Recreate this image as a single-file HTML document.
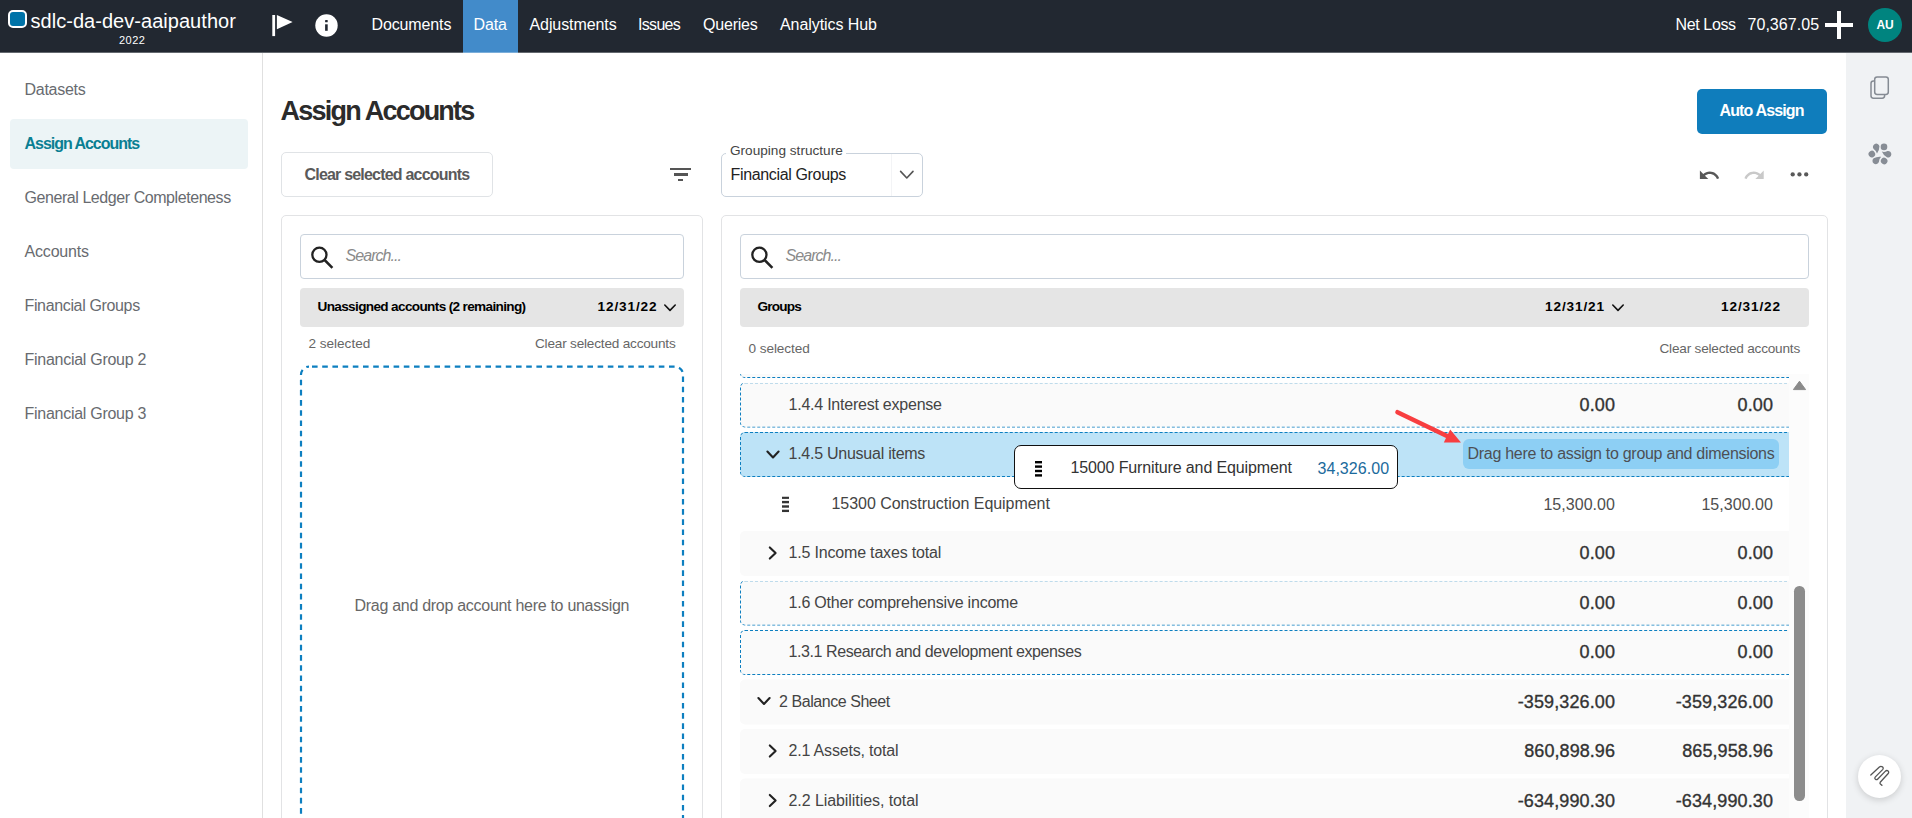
<!DOCTYPE html>
<html lang="en">
<head>
<meta charset="utf-8">
<title>Assign Accounts</title>
<style>
*{box-sizing:border-box;margin:0;padding:0}
html,body{width:1912px;height:818px;overflow:hidden;background:#fff}
body{font-family:"Liberation Sans",sans-serif;font-size:16px;color:#333;position:relative}
.abs{position:absolute}
.t{position:absolute;white-space:nowrap;line-height:20px;height:20px}
.b{font-weight:bold}
#nav{position:absolute;left:0;top:0;width:1912px;height:52px;background:#222831}
#navedge{position:absolute;left:0;top:52px;width:1912px;height:1px;background:#64696f}
#navedge i{position:absolute;left:463px;top:0;width:55px;height:1px;background:#7baeda}
#nav .t{color:#fff}
#tab{position:absolute;left:463px;top:0;width:55px;height:52px;background:#428bca}
#side{position:absolute;left:0;top:53px;width:263px;height:765px;background:#fff;border-right:1px solid #e0e0e0}
#side .t{color:#686b70;left:24.5px}
#sel{position:absolute;left:10px;top:66px;width:238px;height:50px;background:#ecf4f6;border-radius:4px}
#rail{position:absolute;left:1846px;top:53px;width:66px;height:765px;background:#f0f2f4}
.panel{position:absolute;border:1px solid #e2e3e5;border-radius:5px;background:#fff}
.search{position:absolute;height:45px;border:1px solid #c9d2dc;border-radius:4px;background:#fff}
.hdr{position:absolute;height:39px;background:#e5e5e5;border-radius:4px}
.sm{font-size:13.6px;color:#666}
.hb{font-size:13.6px;color:#000;font-weight:bold}
.row{position:absolute;left:0;width:1064px;height:45px;background:#fafafa;border-radius:5px}
.row.d2{border:1px dashed #0d7fc0}
.row .t{top:12px;color:#444}
.num{position:absolute;top:11px;white-space:nowrap;line-height:22px;height:22px;font-size:18px;color:#333;text-align:right;-webkit-text-stroke:0.35px #333}
.num16{position:absolute;top:12.5px;white-space:nowrap;line-height:20px;height:20px;font-size:16px;color:#4e4e4e;text-align:right}
.half{transform:translateY(0.5px)}
/*LS*/
#n_title{letter-spacing:0.038px}
#n_year{letter-spacing:0.504px}
#n1{letter-spacing:-0.122px}
#n2{letter-spacing:-0.100px}
#n3{letter-spacing:-0.090px}
#n4{letter-spacing:-0.685px}
#n5{letter-spacing:-0.202px}
#n6{letter-spacing:-0.070px}
#n7{letter-spacing:-0.371px}
#n8{letter-spacing:0.043px}
#n_au{letter-spacing:-0.060px}
#s1{letter-spacing:-0.283px}
#s2{letter-spacing:-1.031px}
#s3{letter-spacing:-0.433px}
#s4{letter-spacing:-0.174px}
#s5{letter-spacing:-0.352px}
#s6{letter-spacing:-0.274px}
#s7{letter-spacing:-0.274px}
#h1{letter-spacing:-1.764px}
#aa{letter-spacing:-0.868px}
#csa{letter-spacing:-0.799px}
#gl{letter-spacing:0.011px}
#gv{letter-spacing:-0.347px}
#se1{letter-spacing:-0.940px}
#lh1{letter-spacing:-0.656px}
#lh2{letter-spacing:0.885px}
#l2s{letter-spacing:-0.027px}
#lcs{letter-spacing:-0.199px}
#ldd{letter-spacing:-0.286px}
#se2{letter-spacing:-0.940px}
#rh1{letter-spacing:-0.803px}
#rh2{letter-spacing:0.885px}
#rh3{letter-spacing:0.885px}
#r0s{letter-spacing:-0.077px}
#rcs{letter-spacing:-0.199px}
#r0{letter-spacing:-0.231px}
#v0a{letter-spacing:0.098px}
#v0b{letter-spacing:0.098px}
#r1{letter-spacing:-0.252px}
#pill{letter-spacing:-0.288px}
#r2{letter-spacing:-0.050px}
#v2a{letter-spacing:0.043px}
#v2b{letter-spacing:0.043px}
#r3{letter-spacing:-0.180px}
#v3a{letter-spacing:0.098px}
#v3b{letter-spacing:0.098px}
#r4{letter-spacing:-0.208px}
#v4a{letter-spacing:0.098px}
#v4b{letter-spacing:0.098px}
#r5{letter-spacing:-0.408px}
#v5a{letter-spacing:0.098px}
#v5b{letter-spacing:0.098px}
#r6{letter-spacing:-0.443px}
#v6a{letter-spacing:0.107px}
#v6b{letter-spacing:0.107px}
#r7{letter-spacing:-0.176px}
#v7a{letter-spacing:0.061px}
#v7b{letter-spacing:0.061px}
#r8{letter-spacing:-0.073px}
#v8a{letter-spacing:0.107px}
#v8b{letter-spacing:0.107px}
#dc1{letter-spacing:-0.129px}
#dc2{letter-spacing:0.043px}
/*ENDLS*/
</style>
</head>
<body>

<div id="nav">
<div class="abs" style="left:8px;top:10px;width:19px;height:18px;border:2px solid #fff;border-radius:5px;background:#0073a8"></div>
<div class="t" id="n_title" style="left:30.5px;top:10px;font-size:20px;line-height:22px;height:22px">sdlc-da-dev-aaipauthor</div>
<div class="t" id="n_year" style="left:119px;top:33px;font-size:11px;line-height:14px;height:14px">2022</div>
<svg class="abs" style="left:270px;top:13px" width="24" height="24" viewBox="0 0 24 24"><rect x="2.3" y="2" width="2.8" height="21.1" fill="#fff"/><path d="M6.9 2 L22.6 9.1 L6.9 16.2 Z" fill="#fff"/></svg>
<svg class="abs" style="left:315px;top:14px" width="23" height="23" viewBox="0 0 23 23"><circle cx="11.5" cy="11.5" r="11.2" fill="#fff"/><rect x="10.1" y="6.1" width="2.6" height="2.2" rx="0.5" fill="#222831"/><rect x="10.1" y="10.3" width="2.6" height="6.5" fill="#222831"/></svg>
<div id="tab"></div>
<div class="t" id="n1" style="left:371.5px;top:14.5px">Documents</div>
<div class="t" id="n2" style="left:473.5px;top:14.5px">Data</div>
<div class="t" id="n3" style="left:529.5px;top:14.5px">Adjustments</div>
<div class="t" id="n4" style="left:638px;top:14.5px">Issues</div>
<div class="t" id="n5" style="left:703px;top:14.5px">Queries</div>
<div class="t" id="n6" style="left:780px;top:14.5px">Analytics Hub</div>
<div class="t" id="n7" style="left:1675.5px;top:14.5px">Net Loss</div>
<div class="t" id="n8" style="left:1747.5px;top:14.5px">70,367.05</div>
<div class="abs" style="left:1825px;top:23px;width:28px;height:4px;background:#fff"></div>
<div class="abs" style="left:1837px;top:11px;width:4px;height:28px;background:#fff"></div>
<div class="abs" style="left:1868px;top:8px;width:34px;height:34px;border-radius:50%;background:#00847f"></div>
<div class="t b" id="n_au" style="left:1868px;top:15px;width:34px;text-align:center;font-size:12px">AU</div>
</div>
<div id="navedge"><i></i></div>

<div id="side">
<div id="sel"></div>
<div class="t" id="s1" style="top:27px">Datasets</div>
<div class="t b" id="s2" style="top:81px;color:#0a7f93">Assign Accounts</div>
<div class="t" id="s3" style="top:135px">General Ledger Completeness</div>
<div class="t" id="s4" style="top:189px">Accounts</div>
<div class="t" id="s5" style="top:243px">Financial Groups</div>
<div class="t" id="s6" style="top:297px">Financial Group 2</div>
<div class="t" id="s7" style="top:351px">Financial Group 3</div>
</div>
<div id="rail"></div>

<div class="t b" id="h1" style="left:280.5px;top:95px;font-size:27px;line-height:32px;height:32px;color:#2b2b2b">Assign Accounts</div>
<div class="abs" style="left:1697px;top:89px;width:130px;height:45px;background:#0f7dbc;border-radius:5px"></div>
<div class="t b" id="aa" style="left:1719.5px;top:100.5px;color:#fff">Auto Assign</div>
<div class="abs" style="left:281px;top:152px;width:212px;height:45px;border:1px solid #e0e3e6;border-radius:5px"></div>
<div class="t b" id="csa" style="left:304.5px;top:164.5px;color:#5a5a5a">Clear selected accounts</div>
<div class="abs" style="left:670px;top:168px;width:21px;height:2.4px;background:#555"></div>
<div class="abs" style="left:673.5px;top:173.4px;width:14px;height:2.4px;background:#555"></div>
<div class="abs" style="left:678px;top:178.8px;width:5px;height:2.4px;background:#555"></div>
<div class="abs" style="left:721px;top:153px;width:202px;height:44px;border:1px solid #c9d2dc;border-radius:5px"></div>
<div class="abs" style="left:726px;top:150px;width:120px;height:6px;background:#fff"></div>
<div class="abs" style="left:891px;top:154px;width:1px;height:42px;background:#f3f4f6"></div>
<div class="t" id="gl" style="left:730px;top:142px;font-size:13.6px;line-height:18px;height:18px;color:#444">Grouping structure</div>
<div class="t" id="gv" style="left:730.5px;top:164.5px;color:#222">Financial Groups</div>
<svg class="abs" style="left:898px;top:167px" width="18" height="16" viewBox="0 0 18 16"><path d="M2.6 4.4 L8.8 11 L15 4.4" fill="none" stroke="#555" stroke-width="1.6" stroke-linecap="round" stroke-linejoin="round"/></svg>
<div class="abs" style="left:1697px;top:163.5px;width:24px;height:15px;overflow:hidden"><svg width="22.6" height="22.6" viewBox="0 0 24 24" style="position:absolute;left:0.8px;top:0"><path fill="#585858" d="M12.5 8c-2.65 0-5.05.99-6.9 2.6L2 7v9h9l-3.62-3.62c1.39-1.16 3.16-1.88 5.12-1.88 3.54 0 6.55 2.31 7.6 5.5l2.37-.78C21.08 11.03 17.15 8 12.5 8z"/></svg></div>
<div class="abs" style="left:1742px;top:163.5px;width:24px;height:15px;overflow:hidden"><svg width="22.6" height="22.6" viewBox="0 0 24 24" style="position:absolute;left:0.8px;top:0"><path fill="#c9c9c9" d="M18.4 10.6C16.55 8.99 14.15 8 11.5 8c-4.65 0-8.58 3.03-9.96 7.22L3.9 16c1.05-3.19 4.05-5.5 7.6-5.5 1.95 0 3.73.72 5.12 1.88L13 16h9V7l-3.6 3.6z"/></svg></div>
<svg class="abs" style="left:1788px;top:170px" width="24" height="9" viewBox="0 0 24 9"><g fill="#595959"><circle cx="4.7" cy="4.4" r="2.15"/><circle cx="11.45" cy="4.4" r="2.15"/><circle cx="18.2" cy="4.4" r="2.15"/></g></svg>

<div class="panel" style="left:281px;top:215px;width:422px;height:620px"></div>
<div class="search" style="left:300px;top:234px;width:384px"></div>
<svg class="abs" style="left:310px;top:244.7px" width="26" height="26" viewBox="0 0 26 26"><circle cx="9.4" cy="9.8" r="7.1" fill="none" stroke="#222" stroke-width="2.3"/><path d="M14.6 15 L22.4 22.8" stroke="#222" stroke-width="2.5" fill="none"/></svg>
<div class="t" id="se1" style="left:345.5px;top:246px;font-style:italic;color:#8a8a8a">Search...</div>
<div class="hdr" style="left:300px;top:288px;width:384px"></div>
<div class="t hb" id="lh1" style="left:317.5px;top:296.5px">Unassigned accounts (2 remaining)</div>
<div class="t hb" id="lh2" style="left:597.5px;top:296.5px">12/31/22</div>
<svg class="abs" style="left:663px;top:303px" width="14" height="10" viewBox="0 0 14 10"><path d="M1.8 2 L7 7.4 L12.2 2" fill="none" stroke="#111" stroke-width="1.6" stroke-linecap="round" stroke-linejoin="round"/></svg>
<div class="t sm" id="l2s" style="left:308.5px;top:334px">2 selected</div>
<div class="t sm" id="lcs" style="left:535px;top:334px">Clear selected accounts</div>
<svg class="abs" style="left:299px;top:364px" width="388" height="460" viewBox="0 0 388 460"><rect x="2" y="2.6" width="382" height="500" rx="8" ry="8" fill="none" stroke="#0d7fc0" stroke-width="2.2" stroke-dasharray="5.6 4.6" stroke-dashoffset="-3"/></svg>
<div class="t" id="ldd" style="left:354.5px;top:596px;color:#676767">Drag and drop account here to unassign</div>
<div class="panel" style="left:721px;top:215px;width:1107px;height:620px"></div>
<div class="search" style="left:740px;top:234px;width:1069px"></div>
<svg class="abs" style="left:750px;top:244.7px" width="26" height="26" viewBox="0 0 26 26"><circle cx="9.4" cy="9.8" r="7.1" fill="none" stroke="#222" stroke-width="2.3"/><path d="M14.6 15 L22.4 22.8" stroke="#222" stroke-width="2.5" fill="none"/></svg>
<div class="t" id="se2" style="left:785.5px;top:246px;font-style:italic;color:#8a8a8a">Search...</div>
<div class="hdr" style="left:740px;top:288px;width:1069px"></div>
<div class="t hb" id="rh1" style="left:757.5px;top:296.5px">Groups</div>
<div class="t hb" id="rh2" style="left:1545px;top:296.5px">12/31/21</div>
<svg class="abs" style="left:1611px;top:303px" width="14" height="10" viewBox="0 0 14 10"><path d="M1.8 2 L7 7.4 L12.2 2" fill="none" stroke="#111" stroke-width="1.6" stroke-linecap="round" stroke-linejoin="round"/></svg>
<div class="t hb" id="rh3" style="left:1721px;top:296.5px">12/31/22</div>
<div class="t sm" id="r0s" style="left:748.5px;top:339px">0 selected</div>
<div class="t sm" id="rcs" style="left:1659.5px;top:339px">Clear selected accounts</div>
<div class="abs" style="left:740px;top:374px;width:1069px;height:444px;overflow:hidden;background:#fcfcfc">
<div class="abs" style="left:0;top:0;width:1049px;height:444px;background:#fff;overflow:hidden">
<div class="row d2" style="top:-41px"></div>
<div class="row d2 half" style="top:8px"><div class="t" id="r0" style="left:47.5px;margin-top:-1px">1.4.4 Interest expense</div><div class="num" id="v0a" style="left:674px;width:200px;margin-top:-1px">0.00</div><div class="num" id="v0b" style="left:832px;width:200px;margin-top:-1px">0.00</div></div>
<div class="row d2" style="top:58px;background:#bde3f7"><svg class="abs" style="left:23.5px;top:15.5px" width="16" height="12" viewBox="0 0 16 12"><path d="M2.4 2.6 L8 8.4 L13.6 2.6" fill="none" stroke="#222" stroke-width="2.1" stroke-linecap="round" stroke-linejoin="round"/></svg><div class="t" id="r1" style="left:47.5px;margin-top:-1px">1.4.5 Unusual items</div><div class="abs" style="left:722px;top:6px;width:316px;height:30px;border-radius:6px;background:#8dcff4"></div><div class="t" id="pill" style="left:726.5px;top:11px;color:#4d4f54">Drag here to assign to group and dimensions</div></div>
<div class="row  half" style="top:107px;background:#fff"><svg class="abs" style="left:42px;top:15.1px" width="7" height="16" viewBox="0 0 7 16"><rect x="0" y="0.0" width="7" height="2.4" fill="#333"/><rect x="0" y="4.4" width="7" height="2.4" fill="#333"/><rect x="0" y="8.8" width="7" height="2.4" fill="#333"/><rect x="0" y="13.2" width="7" height="2.4" fill="#333"/></svg><div class="t" id="r2" style="left:91.5px;margin-top:-0px">15300 Construction Equipment</div><div class="num16" id="v2a" style="left:675px;width:200px;margin-top:-0px">15,300.00</div><div class="num16" id="v2b" style="left:833px;width:200px;margin-top:-0px">15,300.00</div></div>
<div class="row" style="top:157px"><svg class="abs" style="left:26.5px;top:14px" width="12" height="16" viewBox="0 0 12 16"><path d="M2.8 2.4 L8.6 8 L2.8 13.6" fill="none" stroke="#222" stroke-width="2.1" stroke-linecap="round" stroke-linejoin="round"/></svg><div class="t" id="r3" style="left:48.5px;margin-top:-0px">1.5 Income taxes total</div><div class="num" id="v3a" style="left:675px;width:200px;margin-top:-0px">0.00</div><div class="num" id="v3b" style="left:833px;width:200px;margin-top:-0px">0.00</div></div>
<div class="row d2 half" style="top:206px"><div class="t" id="r4" style="left:47.5px;margin-top:-1px">1.6 Other comprehensive income</div><div class="num" id="v4a" style="left:674px;width:200px;margin-top:-1px">0.00</div><div class="num" id="v4b" style="left:832px;width:200px;margin-top:-1px">0.00</div></div>
<div class="row d2" style="top:256px"><div class="t" id="r5" style="left:47.5px;margin-top:-1px">1.3.1 Research and development expenses</div><div class="num" id="v5a" style="left:674px;width:200px;margin-top:-1px">0.00</div><div class="num" id="v5b" style="left:832px;width:200px;margin-top:-1px">0.00</div></div>
<div class="row  half" style="top:305px"><svg class="abs" style="left:15.5px;top:16.0px" width="16" height="12" viewBox="0 0 16 12"><path d="M2.4 2.6 L8 8.4 L13.6 2.6" fill="none" stroke="#222" stroke-width="2.1" stroke-linecap="round" stroke-linejoin="round"/></svg><div class="t" id="r6" style="left:39px;margin-top:-0px">2 Balance Sheet</div><div class="num" id="v6a" style="left:675px;width:200px;margin-top:-0px">-359,326.00</div><div class="num" id="v6b" style="left:833px;width:200px;margin-top:-0px">-359,326.00</div></div>
<div class="row" style="top:355px"><svg class="abs" style="left:26.5px;top:14px" width="12" height="16" viewBox="0 0 12 16"><path d="M2.8 2.4 L8.6 8 L2.8 13.6" fill="none" stroke="#222" stroke-width="2.1" stroke-linecap="round" stroke-linejoin="round"/></svg><div class="t" id="r7" style="left:48.5px;margin-top:-0px">2.1 Assets, total</div><div class="num" id="v7a" style="left:675px;width:200px;margin-top:-0px">860,898.96</div><div class="num" id="v7b" style="left:833px;width:200px;margin-top:-0px">865,958.96</div></div>
<div class="row  half" style="top:404px"><svg class="abs" style="left:26.5px;top:14px" width="12" height="16" viewBox="0 0 12 16"><path d="M2.8 2.4 L8.6 8 L2.8 13.6" fill="none" stroke="#222" stroke-width="2.1" stroke-linecap="round" stroke-linejoin="round"/></svg><div class="t" id="r8" style="left:48.5px;margin-top:-0px">2.2 Liabilities, total</div><div class="num" id="v8a" style="left:675px;width:200px;margin-top:-0px">-634,990.30</div><div class="num" id="v8b" style="left:833px;width:200px;margin-top:-0px">-634,990.30</div></div>
</div>
<svg class="abs" style="left:1052px;top:5px" width="15" height="12" viewBox="0 0 15 12"><path d="M7.5 2.2 L13.6 10.6 L1.4 10.6 Z" fill="#8a8a8a" stroke="#8a8a8a" stroke-width="1" stroke-linejoin="round"/></svg>
<div class="abs" style="left:1054.3px;top:212.29999999999995px;width:10.4px;height:215px;border-radius:5.2px;background:#8c8c8c"></div>
</div>
<div class="abs" style="left:1014px;top:445px;width:384px;height:44px;border:1.2px solid #111;border-radius:7px;background:#fff"></div>
<svg class="abs" style="left:1035px;top:460.8px" width="7" height="16" viewBox="0 0 7 16"><rect x="0" y="0.0" width="7" height="2.4" fill="#000"/><rect x="0" y="4.4" width="7" height="2.4" fill="#000"/><rect x="0" y="8.8" width="7" height="2.4" fill="#000"/><rect x="0" y="13.2" width="7" height="2.4" fill="#000"/></svg>
<div class="t" id="dc1" style="left:1070.5px;top:458px;color:#333">15000 Furniture and Equipment</div>
<div class="t" id="dc2" style="left:1317.5px;top:459px;color:#1b6a9c">34,326.00</div>
<svg class="abs" style="left:1385px;top:400px" width="90" height="55" viewBox="0 0 90 55"><path d="M12.5 12.2 L62 36" stroke="#f83e40" stroke-width="4.6" stroke-linecap="round" fill="none"/><path d="M76 42.6 L58.8 42.6 L65.2 29.6 Z" fill="#f83e40"/></svg>
<svg class="abs" style="left:1868px;top:74px" width="24" height="28" viewBox="0 0 24 28"><rect x="6.7" y="2.9" width="13.6" height="17.6" rx="2.4" ry="2.4" fill="none" stroke="#858b93" stroke-width="1.5"/><path d="M6.7 7 H5.4 A2.4 2.4 0 0 0 3 9.4 V21.8 A2.4 2.4 0 0 0 5.4 24.2 H14.2 A2.4 2.4 0 0 0 16.6 21.8 V20.5" fill="none" stroke="#858b93" stroke-width="1.5"/></svg>
<svg class="abs" style="left:1865.75px;top:140.15px" width="28" height="28" viewBox="-14 -14 28 28"><g fill="#878d95"><g><path d="M-0.55 -7.67 Q-0.6 -3.4 -3.0 -0.4 Q-3.7 -3.2 -6.33 -4.98 A3.3 3.3 0 1 1 -0.55 -7.67 Z"/><circle cx="4.0" cy="-7.1" r="3.3"/></g><g transform="rotate(120)"><path d="M-0.55 -7.67 Q-0.6 -3.4 -3.0 -0.4 Q-3.7 -3.2 -6.33 -4.98 A3.3 3.3 0 1 1 -0.55 -7.67 Z"/><circle cx="4.0" cy="-7.1" r="3.3"/></g><g transform="rotate(240)"><path d="M-0.55 -7.67 Q-0.6 -3.4 -3.0 -0.4 Q-3.7 -3.2 -6.33 -4.98 A3.3 3.3 0 1 1 -0.55 -7.67 Z"/><circle cx="4.0" cy="-7.1" r="3.3"/></g></g></svg>
<div class="abs" style="left:1858px;top:755px;width:43px;height:43px;border-radius:50%;background:#fff;box-shadow:0 2px 7px rgba(0,0,0,0.16)"></div><svg class="abs" style="left:1865.5px;top:762.4px" width="28" height="28" viewBox="-14 -14 28 28"><path d="M-9.2 -0.9 L-0.6 -8.9 C1.2 -10.6 4.6 -8.6 2.6 -6.4 L-4.6 0.9 C-6.4 3 -3.6 4.4 -2.2 3 L5.2 -4.6 C7.2 -6.6 10 -4.4 8 -2.2 L0.2 6.3 C-0.6 7.4 0.6 8.6 2 9.3" fill="none" stroke="#555" stroke-width="1.3" stroke-linecap="round" stroke-linejoin="round"/></svg>
</body>
</html>
